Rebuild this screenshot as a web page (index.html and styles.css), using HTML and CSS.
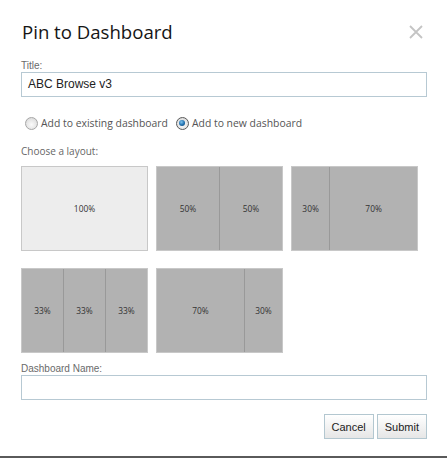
FILE: index.html
```html
<!DOCTYPE html>
<html>
<head>
<meta charset="utf-8">
<link rel="stylesheet" href="styles.css">
</head>
<body>
<div class="dialog">
  <div class="header">
    <h1 class="title">Pin to Dashboard</h1>
    <span class="close" aria-label="Close">
      <svg width="14" height="14" viewBox="0 0 14 14"><path d="M1 1 L13 13 M13 1 L1 13" stroke="#c4c4c4" stroke-width="1.8" fill="none"/></svg>
    </span>
  </div>
  <div class="field">
    <label class="label">Title:</label>
    <div class="input">ABC Browse v3</div>
  </div>
  <div class="radios">
    <span class="radio-item"><span class="radio"></span>Add to existing dashboard</span>
    <span class="radio-item"><span class="radio checked"></span>Add to new dashboard</span>
  </div>
  <div class="section-label">Choose a layout:</div>
  <div class="layouts">
    <div class="layout selected"><div class="col" style="flex:100">100%</div></div>
    <div class="layout"><div class="col" style="flex:50">50%</div><div class="col" style="flex:50">50%</div></div>
    <div class="layout"><div class="col" style="flex:30">30%</div><div class="col" style="flex:70">70%</div></div>
    <div class="layout"><div class="col" style="flex:33">33%</div><div class="col" style="flex:33">33%</div><div class="col" style="flex:33">33%</div></div>
    <div class="layout"><div class="col" style="flex:70">70%</div><div class="col" style="flex:30">30%</div></div>
  </div>
  <div class="field name-field">
    <label class="label">Dashboard Name:</label>
    <div class="input"></div>
  </div>
  <div class="actions">
    <button class="btn">Cancel</button>
    <button class="btn">Submit</button>
  </div>
</div>
<div class="bottom-line"></div>
</body>
</html>
```
FILE: styles.css
```css
html, body {
  margin: 0;
  padding: 0;
  background: #fff;
}
body {
  height: 459px;
  position: relative;
  overflow: hidden;
}
.dialog {
  padding: 18px 20px 0 21px;
  font-family: "Open Sans", sans-serif;
}
.header {
  display: flex;
  justify-content: space-between;
  align-items: flex-start;
}
.title {
  margin: 0 0 0 1px;
  font-size: 18.6px;
  font-weight: normal;
  line-height: 28px;
  color: #151515;
}
.close {
  display: block;
  margin: 7px 4px 0 0;
  width: 14px;
  height: 14px;
}
.close svg { display: block; }
.field {
  margin-top: 14px;
}
.label {
  display: block;
  font-family: "Liberation Sans", Arial, sans-serif;
  font-size: 10px;
  line-height: 12px;
  color: #6a6a6a;
}
.input {
  box-sizing: border-box;
  height: 25px;
  border: 1px solid #b7c9d3;
  font-family: "Liberation Sans", Arial, sans-serif;
  font-size: 12px;
  line-height: 23px;
  padding-left: 6px;
  color: #222;
}
.radios {
  display: flex;
  align-items: center;
  margin-top: 18px;
  margin-left: 4px;
  height: 16px;
  font-size: 10.4px;
  color: #555;
}
.radio-item {
  display: flex;
  align-items: center;
  margin-right: 8px;
}
.radio {
  box-sizing: border-box;
  width: 13px;
  height: 13px;
  border-radius: 50%;
  border: 1px solid #a6a6a6;
  background: radial-gradient(circle at 50% 60%, #fbfbfb 0%, #e4e4e4 60%, #d0d0d0 100%);
  margin-right: 3px;
  position: relative;
}
.radio.checked::after {
  content: "";
  position: absolute;
  left: 2.5px;
  top: 2.5px;
  width: 6px;
  height: 6px;
  border-radius: 50%;
  background: radial-gradient(circle at 40% 35%, #7fc3ee 0%, #1f6fae 55%, #0d3c66 100%);
}
.radio.checked {
  border-color: #5a5a5a;
}
.section-label {
  margin-top: 13px;
  font-size: 10px;
  line-height: 14px;
  color: #666;
}
.layouts {
  display: flex;
  flex-wrap: wrap;
  width: 420px;
  margin-top: 8px;
}
.layout {
  box-sizing: border-box;
  width: 127px;
  height: 85px;
  border: 1px solid #c8c8c8;
  margin: 0 8px 17px 0;
  display: flex;
  background: #b2b2b2;
}
.layout.selected {
  background: #ededed;
}
.col {
  display: flex;
  align-items: center;
  justify-content: center;
  font-size: 8.4px;
  color: #333;
  border-left: 1px solid #999;
}
.col:first-child {
  border-left: none;
}
.name-field {
  margin-top: -7px;
}
.actions {
  display: flex;
  justify-content: flex-end;
  gap: 3px;
  margin-top: 14px;
}
.btn {
  box-sizing: border-box;
  height: 25px;
  padding: 0 7px;
  border: 1px solid #b3c7d0;
  background: linear-gradient(#ffffff, #e6e6e6);
  font-family: "Liberation Sans", Arial, sans-serif;
  font-size: 11px;
  color: #222;
  border-radius: 0;
}
.bottom-line {
  position: absolute;
  left: 0;
  right: 0;
  top: 456px;
  height: 2px;
  background: #5a5a5a;
}
```
